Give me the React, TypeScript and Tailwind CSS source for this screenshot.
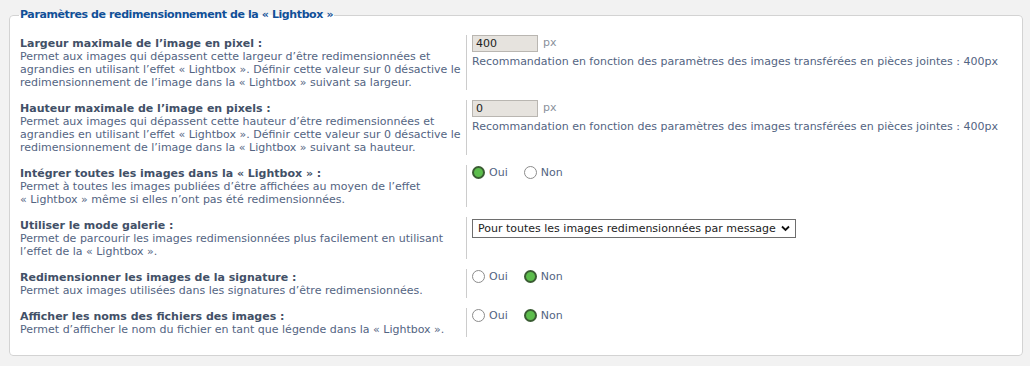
import React from "react";

const Radio = ({ checked }: { checked: boolean }) =>
  checked ? (
    <span className="inline-block w-[13px] h-[13px] rounded-full border-2 border-[#3a5c33] bg-[#5cbd4c] shrink-0" />
  ) : (
    <span className="inline-block w-[13px] h-[13px] rounded-full border border-[#8c8c8c] bg-white shrink-0" />
  );

const YesNo = ({ yes }: { yes: boolean }) => (
  <div className="flex items-center pt-[1px]">
    <Radio checked={yes} />
    <span className="ml-[4px] leading-[13px]">Oui</span>
    <span className="ml-[16px] flex">
      <Radio checked={!yes} />
    </span>
    <span className="ml-[4px] leading-[13px]">Non</span>
  </div>
);

const Row = ({
  title,
  lines,
  children,
}: {
  title: string;
  lines: string[];
  children: React.ReactNode;
}) => (
  <div className="flex mb-[10px] last:mb-0">
    <div className="w-[447px] shrink-0 border-r border-[#cccccc] pt-[2px] pb-[1px] leading-[13px] whitespace-nowrap">
      <div className="font-bold text-[#425067]">{title}</div>
      {lines.map((l, i) => (
        <div key={i}>{l}</div>
      ))}
    </div>
    <div className="pl-[5px] flex-1">{children}</div>
  </div>
);

const SizeInput = ({ value }: { value: string }) => (
  <div>
    <div className="flex items-center">
      <div className="w-[66px] h-[17px] bg-[#e6e3de] border border-[#b9b6b1] px-[3px] text-[#222] leading-[15px]">
        {value}
      </div>
      <span className="ml-[5px] text-[#8a919c]">px</span>
    </div>
    <div className="mt-[3px] leading-[13px] whitespace-nowrap">
      Recommandation en fonction des paramètres des images transférées en pièces jointes : 400px
    </div>
  </div>
);

export default function App() {
  return (
    <div
      className="w-[1030px] h-[366px] bg-[#f2f2f2] pt-[6px] pl-[9px] pr-[7px] text-[11px] text-[#536482]"
      style={{ fontFamily: '"DejaVu Sans", Verdana, sans-serif' }}
    >
      <fieldset className="bg-white border border-[#d3d3d3] rounded-[4px] px-[10px] pt-[11px] pb-[18px] m-0 min-w-0">
        <legend className="px-[1px] ml-[-1px] font-bold text-[#115098] leading-[18px] text-[11px] tracking-[-0.4px]">
          Paramètres de redimensionnement de la « Lightbox »
        </legend>
        <Row
          title="Largeur maximale de l’image en pixel :"
          lines={[
            "Permet aux images qui dépassent cette largeur d’être redimensionnées et",
            "agrandies en utilisant l’effet « Lightbox ». Définir cette valeur sur 0 désactive le",
            "redimensionnement de l’image dans la « Lightbox » suivant sa largeur.",
          ]}
        >
          <SizeInput value="400" />
        </Row>
        <Row
          title="Hauteur maximale de l’image en pixels :"
          lines={[
            "Permet aux images qui dépassent cette hauteur d’être redimensionnées et",
            "agrandies en utilisant l’effet « Lightbox ». Définir cette valeur sur 0 désactive le",
            "redimensionnement de l’image dans la « Lightbox » suivant sa hauteur.",
          ]}
        >
          <SizeInput value="0" />
        </Row>
        <Row
          title="Intégrer toutes les images dans la « Lightbox » :"
          lines={[
            "Permet à toutes les images publiées d’être affichées au moyen de l’effet",
            "« Lightbox » même si elles n’ont pas été redimensionnées.",
          ]}
        >
          <YesNo yes={true} />
        </Row>
        <Row
          title="Utiliser le mode galerie :"
          lines={[
            "Permet de parcourir les images redimensionnées plus facilement en utilisant",
            "l’effet de la « Lightbox ».",
          ]}
        >
          <div className="pt-[2px]">
            <div className="w-[324px] h-[19px] border border-[#6e6e6e] bg-white flex items-center pl-[5px] pr-[5px] text-[#222] leading-[17px]">
              <span className="flex-1 whitespace-nowrap">
                Pour toutes les images redimensionnées par message
              </span>
              <svg width="9" height="7" viewBox="0 0 9 7" className="shrink-0">
                <path d="M1 1.5 L4.5 5 L8 1.5" fill="none" stroke="#111" strokeWidth="1.8" />
              </svg>
            </div>
          </div>
        </Row>
        <Row
          title="Redimensionner les images de la signature :"
          lines={["Permet aux images utilisées dans les signatures d’être redimensionnées."]}
        >
          <YesNo yes={false} />
        </Row>
        <Row
          title="Afficher les noms des fichiers des images :"
          lines={["Permet d’afficher le nom du fichier en tant que légende dans la « Lightbox »."]}
        >
          <YesNo yes={false} />
        </Row>
      </fieldset>
    </div>
  );
}
